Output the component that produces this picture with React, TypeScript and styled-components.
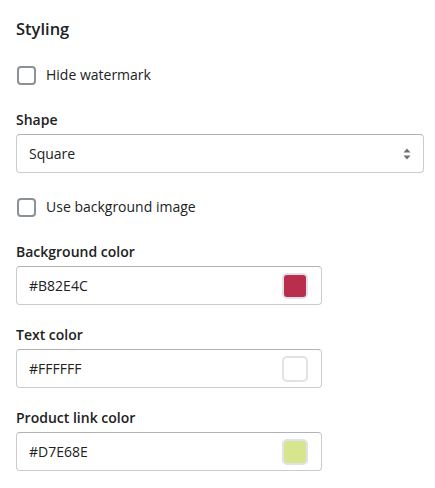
import React from "react";
import styled, { createGlobalStyle } from "styled-components";

const GlobalStyle = createGlobalStyle`
  body {
    margin: 0;
    background: #ffffff;
    font-family: "Open Sans", "Noto Sans", sans-serif;
    color: #202223;
  }
`;

const Panel = styled.div`
  width: 435px;
  padding: 17px 16px 0 16px;
  box-sizing: border-box;
`;

const Heading = styled.h2`
  margin: 0;
  font-size: 16.5px;
  font-weight: 600;
  line-height: 24px;
  color: #202223;
`;

const Field = styled.div<{ top: number }>`
  margin-top: ${(p) => p.top}px;
  display: flex;
  flex-direction: column;
`;

const Label = styled.div`
  font-size: 14px;
  font-weight: 600;
  line-height: 20px;
  margin-bottom: 4px;
`;

const CheckRow = styled.label`
  display: flex;
  align-items: center;
  gap: 10px;
  font-size: 14px;
  line-height: 20px;
  padding-left: 1px;
`;

const CheckBox = styled.span`
  width: 19px;
  height: 19px;
  box-sizing: border-box;
  border: 2px solid #8c9196;
  border-radius: 4px;
  background: #ffffff;
`;

const SelectBox = styled.div<{ width: number }>`
  width: ${(p) => p.width}px;
  height: 39px;
  box-sizing: border-box;
  border: 1px solid #c9cccf;
  border-top-color: #aeb4b9;
  border-radius: 4px;
  display: flex;
  align-items: center;
  justify-content: space-between;
  padding: 0 12px 0 12px;
  font-size: 14px;
`;

const Swatch = styled.span<{ fill: string }>`
  width: 26px;
  height: 26px;
  box-sizing: border-box;
  border: 2px solid #dfe3e8;
  border-radius: 5px;
  background: ${(p) => p.fill};
  margin-right: 1px;
`;

function SelectArrows() {
  return (
    <svg width="8" height="12" viewBox="0 0 8 12">
      <path d="M4 0.5 L7.5 4.5 H0.5 Z" fill="#6d7175" />
      <path d="M4 11.5 L7.5 7.5 H0.5 Z" fill="#6d7175" />
    </svg>
  );
}

const colors = [
  { label: "Background color", value: "#B82E4C", fill: "#B82E4C" },
  { label: "Text color", value: "#FFFFFF", fill: "#FFFFFF" },
  { label: "Product link color", value: "#D7E68E", fill: "#D7E68E" },
];

export default function App() {
  return (
    <>
      <GlobalStyle />
      <Panel>
        <Heading>Styling</Heading>
        <Field top={24}>
          <CheckRow>
            <CheckBox />
            Hide watermark
          </CheckRow>
        </Field>
        <Field top={25}>
          <Label>Shape</Label>
          <SelectBox width={408}>
            Square
            <SelectArrows />
          </SelectBox>
        </Field>
        <Field top={24}>
          <CheckRow>
            <CheckBox />
            Use background image
          </CheckRow>
        </Field>
        {colors.map((c, i) => (
          <Field key={c.label} top={i === 0 ? 25 : 20}>
            <Label>{c.label}</Label>
            <SelectBox width={306}>
              {c.value}
              <Swatch fill={c.fill} />
            </SelectBox>
          </Field>
        ))}
      </Panel>
    </>
  );
}
